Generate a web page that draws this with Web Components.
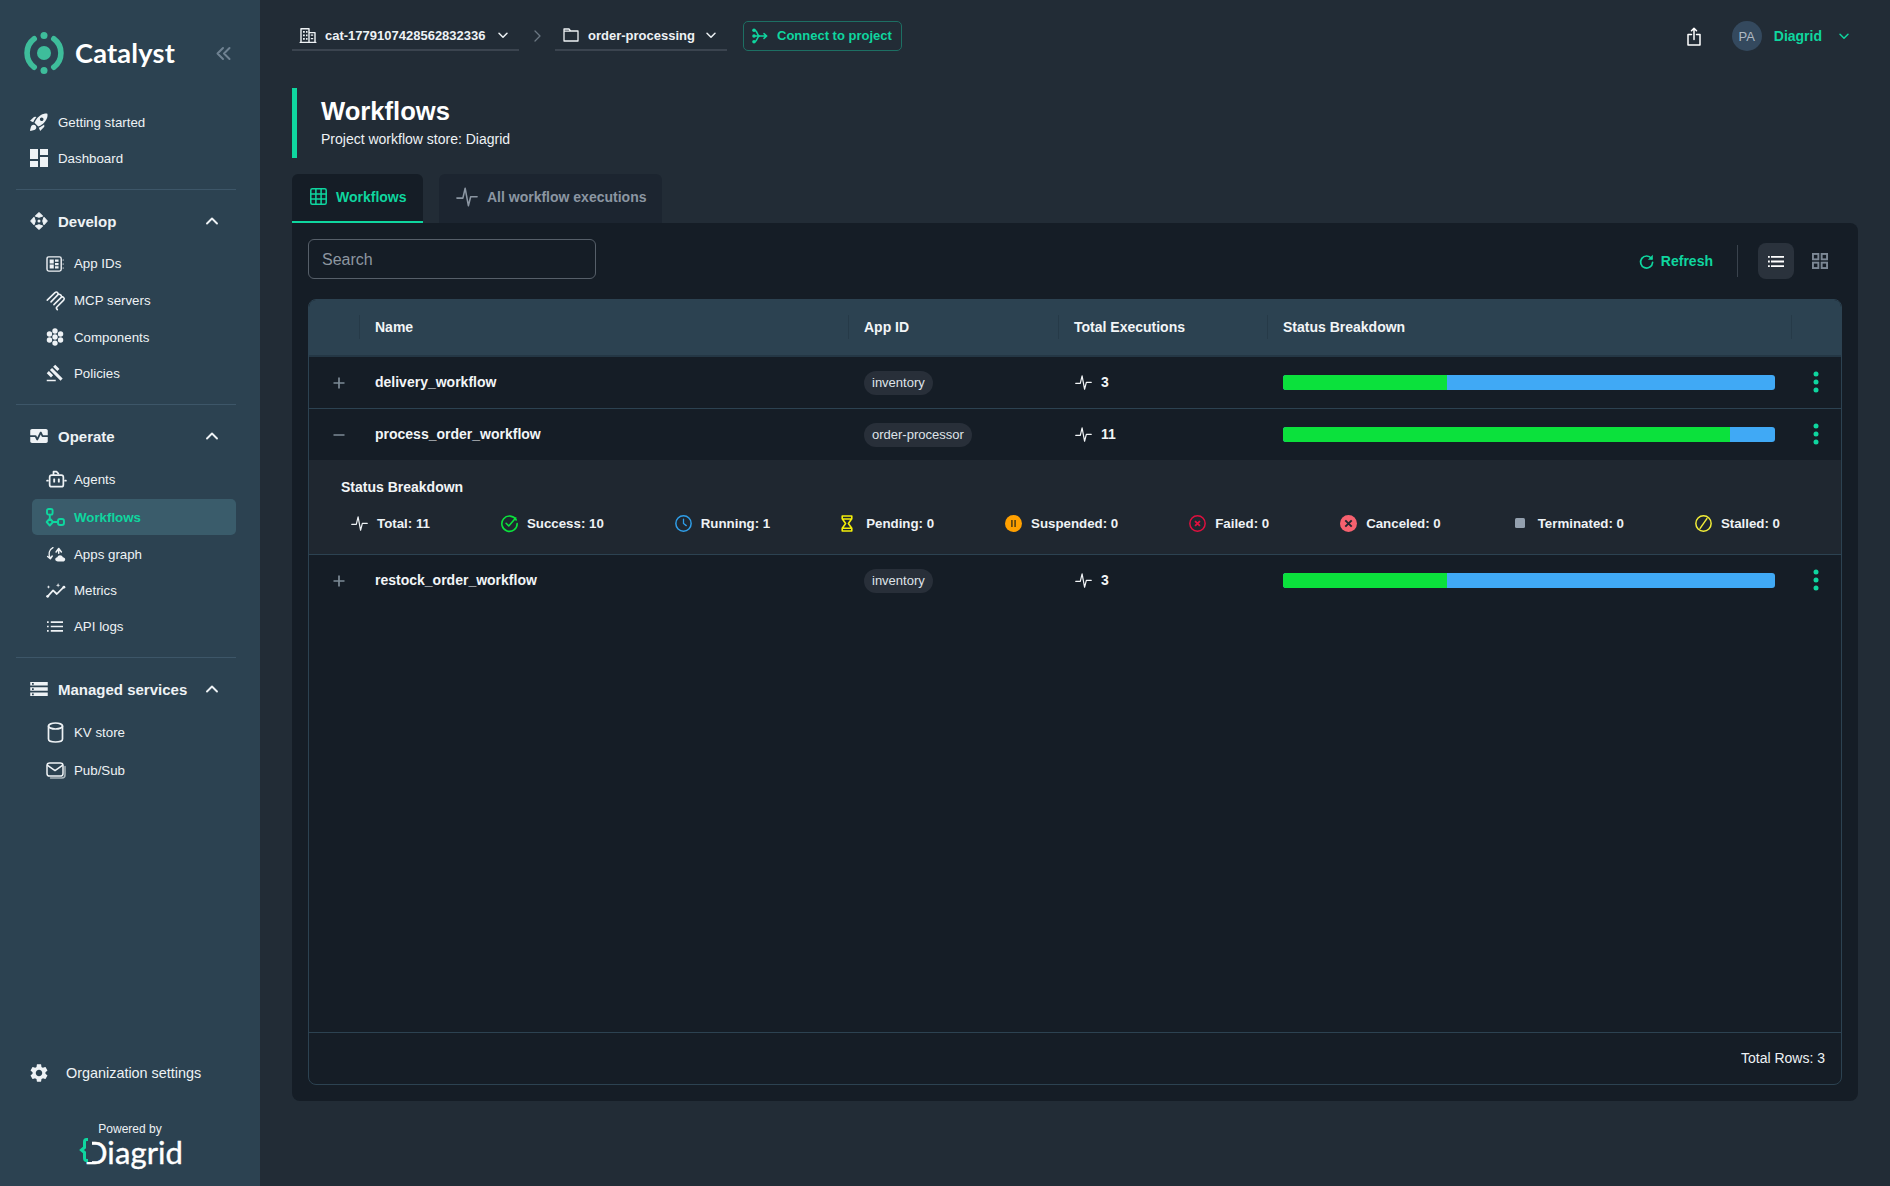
<!DOCTYPE html>
<html lang="en"><head><meta charset="utf-8"><title>Workflows</title>
<style>
html,body{margin:0;padding:0;width:1890px;height:1186px;overflow:hidden;background:#222c36}
body{font-family:"Liberation Sans",Arial,sans-serif;color:#fff}
</style></head><body>
<cat-app>
  <cat-sidebar slot="sidebar">
    <nav-item icon="rocket">Getting started</nav-item>
    <nav-item icon="dashboard">Dashboard</nav-item>
    <nav-rule></nav-rule>
    <nav-head icon="develop">Develop</nav-head>
    <sub-item icon="appids" h="37" gap="6">App IDs</sub-item>
    <sub-item icon="mcp" h="37">MCP servers</sub-item>
    <sub-item icon="components">Components</sub-item>
    <sub-item icon="gavel">Policies</sub-item>
    <nav-rule></nav-rule>
    <nav-head icon="operate">Operate</nav-head>
    <sub-item icon="agent" gap="7">Agents</sub-item>
    <sub-item icon="flow" active>Workflows</sub-item>
    <sub-item icon="graph">Apps graph</sub-item>
    <sub-item icon="metrics">Metrics</sub-item>
    <sub-item icon="logs">API logs</sub-item>
    <nav-rule></nav-rule>
    <nav-head icon="storage">Managed services</nav-head>
    <sub-item icon="kv" gap="7">KV store</sub-item>
    <sub-item icon="pubsub" gap="2.500">Pub/Sub</sub-item>
  </cat-sidebar>
  <top-bar></top-bar>
  <page-header title="Workflows">Project workflow store: Diagrid</page-header>
  <tab-bar></tab-bar>
  <wf-card>
    <wf-table>
      <wf-row name="delivery_workflow" app="inventory" count="3" pct="33.33"></wf-row>
      <wf-row name="process_order_workflow" app="order-processor" count="11" pct="90.9" open></wf-row>
      <wf-detail></wf-detail>
      <wf-row name="restock_order_workflow" app="inventory" count="3" pct="33.33" last></wf-row>
    </wf-table>
  </wf-card>
</cat-app>
<script>
const S=(vb,body,extra='')=>`<svg xmlns="http://www.w3.org/2000/svg" viewBox="${vb}" ${extra}>${body}</svg>`;
const F='fill="currentColor"', L='fill="none" stroke="currentColor" stroke-linecap="round" stroke-linejoin="round"';
const pulse=S('0 0 24 24',`<path ${L} stroke-width="1.7" d="M1 13.200h6.500L10 2.500l3.500 19L16 11.800h7"/>`);
const ICONS={
 rocket:S('2 2 20 20',`<path ${F} d="M9.19 6.35c-2.04 2.29-3.44 5.58-3.57 5.89L2 10.69l4.05-4.05c.47-.47 1.15-.68 1.81-.55l1.33.26zM11.17 17s3.74-1.55 5.89-3.7c5.4-5.4 4.5-9.62 4.21-10.57-.95-.3-5.17-1.19-10.57 4.21C8.55 9.09 7 12.83 7 12.83L11.17 17zm6.48-2.19c-2.29 2.04-5.58 3.44-5.89 3.57L13.31 22l4.05-4.05c.47-.47.68-1.15.55-1.81l-.26-1.33zM9 18c0 .83-.34 1.58-.88 2.12C6.94 21.3 2 22 2 22s.7-4.94 1.88-6.12C4.42 15.34 5.17 15 6 15c1.66 0 3 1.34 3 3zm4-9c0-1.1.9-2 2-2s2 .9 2 2-.9 2-2 2-2-.9-2-2z"/>`),
 dashboard:S('3 3 18 18',`<path ${F} d="M3 13h8V3H3v10zm0 8h8v-6H3v6zm10 0h8V11h-8v10zm0-18v6h8V3h-8z"/>`),
 develop:S('2 2 20 20',`<g ${F} stroke="currentColor" stroke-width="1.200" stroke-linejoin="round"><path d="M12 2.800 16 6.500 12 7.800 8 6.500zM12 21.200 16 17.500 12 16.200 8 17.500zM2.800 12 6.500 8 7.800 12 6.500 16zM21.200 12 17.500 8 16.200 12 17.500 16z"/></g><circle ${F} cx="12" cy="12" r="1.700"/>`),
 operate:S('2 4 20 16',`<path ${F} d="M15.11 12.45 14 10.24l-3.11 6.21c-.16.34-.51.55-.89.55s-.73-.21-.89-.55L7.38 13H2v5c0 1.1.9 2 2 2h16c1.1 0 2-.9 2-2v-5h-6c-.38 0-.73-.21-.89-.55z"/><path ${F} d="M20 4H4c-1.1 0-2 .9-2 2v5h6c.38 0 .73.21.89.55L10 13.76l3.11-6.21c.34-.68 1.45-.68 1.79 0L16.62 11H22V6c0-1.1-.9-2-2-2z"/>`),
 storage:S('2 4 20 16',`<path ${F} d="M2 20h20v-4H2v4zm2-3h2v2H4v-2zM2 4v4h20V4H2zm4 3H4V5h2v2zm-4 7h20v-4H2v4zm2-3h2v2H4v-2z"/>`),
 appids:S('0 0 20 18',`<rect ${L} stroke-width="1.6" x="1" y="1" width="16" height="16" rx="2"/><path ${L} stroke-width="1.2" d="M19 4.5h.4M19 9h.4M19 13.5h.4"/><path ${F} d="M4 4h4.6v4.4H4zM4 9.6h4.6V14H4zM10 4h4v2.6h-4zM10 7.8h4v2.6h-4zM10 11.6h4V14h-4z"/>`),
 mcp:S('0 0 24 24',`<path ${L} stroke-width="1.900" d="M1.500 11.500 10.800 2.600c2.200-2 5 .8 3 3L6 13.600M14 5.200c2.200-2 6 1.200 4 3.400L9.500 17M18 8.400c2.200-2 5.200 1 3.200 3.200L13 19.800c-1.200 1.200-.4 2.200.6 3.200"/>`),
 components:S('0 0 24 24',`<g ${F}><circle cx="12" cy="3.9" r="3.6"/><circle cx="12" cy="12" r="3.6"/><circle cx="12" cy="20.1" r="3.6"/><circle cx="4.6" cy="8" r="3.6"/><circle cx="19.4" cy="8" r="3.6"/><circle cx="4.6" cy="16" r="3.6"/><circle cx="19.4" cy="16" r="3.6"/></g>`),
 gavel:S('0 0 24 24',`<path ${F} d="M1 21h12v2H1v-2zM5.245 8.07l2.83-2.827 14.14 14.142-2.828 2.828L5.245 8.07zM12.317 1l5.657 5.656-2.83 2.83-5.654-5.66L12.317 1zM3.825 9.485l5.657 5.657-2.828 2.828-5.657-5.657 2.828-2.828z"/>`),
 agent:S('0 0 24 21',`<rect ${L} stroke-width="2" x="4" y="6" width="16" height="13.5" rx="2.4"/><path ${L} stroke-width="2" d="M8.5 6V2H12l2.2 2.2M1 12.5h1M22 12.5h1"/><rect ${F} x="8.2" y="10" width="2.2" height="4.6" rx=".6"/><rect ${F} x="13.6" y="10" width="2.2" height="4.6" rx=".6"/>`),
 flow:S('0 0 19 19',`<g ${L} stroke-width="1.900"><rect x="1" y="1" width="5.6" height="5.6" rx="1.6"/><path d="M3.8 6.6v3.9M3.8 10.5 7 14l-3.2 3.5L.7 14zM7 14h5"/><rect x="12" y="11" width="6" height="6" rx="2"/></g>`),
 graph:S('0 0 24 20',`<path ${F} d="M13.8 19.5c-2 0-3.4-1.2-3.4-2.8 0-1.5 1.2-2.6 2.6-2.7.5-1.6 1.9-2.5 3.4-2.5 1.8 0 3.2 1.1 3.6 2.7 1.6.2 3 1.2 3 2.600 0 1.500-1.500 2.700-3.200 2.700z"/><path ${L} stroke-width="1.900" d="M11.500 7.500 14.800 3l3.400 4.500M14.800 3v6M7.500 2C2.800 4.500 1.400 10 4 15.500M.8 13.200 4.200 16l2.400-3.400"/>`),
 metrics:S('0 0 24 18',`<path ${L} stroke-width="2.100" d="M2 16 8.500 8.800l4.500 4.400L21.200 5"/><circle ${F} cx="2" cy="16" r="1.700"/><circle ${F} cx="21.500" cy="5" r="1.700"/><path ${F} d="M3 2.800l.6 1.500 1.500.6-1.500.6L3 7 2.400 5.500.9 4.900l1.500-.6zM14.500 0l.7 2 2 .7-2 .7-.7 2-.7-2-2-.7 2-.7z"/>`),
 logs:S('0 0 17 11',`<path ${F} d="M0 0h1.800v1.800H0zM0 4.600h1.800v1.800H0zM0 9.200h1.800V11H0zM4 0h13v1.800H4zM4 4.600h13v1.800H4zM4 9.200h13V11H4z"/>`),
 kv:S('0 0 17 21',`<g ${L} stroke-width="1.700"><ellipse cx="8.500" cy="4" rx="7" ry="3"/><path d="M1.500 4v13c0 2 3 3 7 3s7-1 7-3V4"/></g>`),
 pubsub:S('0 0 20 17',`<rect ${L} stroke-width="1.500" x="1" y="1" width="16" height="13" rx="2.600"/><path ${L} stroke-width="1.500" d="M1.600 3.400 9 8.600l7.400-5.200"/><path ${L} stroke-width="1.500" opacity=".65" d="M19 4.500V13c0 2-1 3-3 3H4.500"/>`),
 gear:S('2 2 20 20',`<path ${F} d="M19.14 12.94c.04-.3.06-.61.06-.94 0-.32-.02-.64-.07-.94l2.03-1.58c.18-.14.23-.41.12-.61l-1.92-3.32c-.12-.22-.37-.29-.59-.22l-2.39.96c-.5-.38-1.03-.7-1.62-.94l-.36-2.54c-.04-.24-.24-.41-.48-.41h-3.84c-.24 0-.43.17-.47.41l-.36 2.54c-.59.24-1.13.57-1.62.94l-2.39-.96c-.22-.08-.47 0-.59.22L2.74 8.87c-.12.21-.08.47.12.61l2.03 1.58c-.05.3-.09.63-.09.94s.02.64.07.94l-2.03 1.58c-.18.14-.23.41-.12.61l1.92 3.32c.12.22.37.29.59.22l2.39-.96c.5.38 1.03.7 1.62.94l.36 2.54c.05.24.24.41.48.41h3.84c.24 0 .44-.17.47-.41l.36-2.54c.59-.24 1.13-.56 1.62-.94l2.39.96c.22.08.47 0 .59-.22l1.92-3.32c.12-.22.07-.47-.12-.61l-2.01-1.58zM12 15.6c-1.98 0-3.6-1.62-3.6-3.6s1.62-3.6 3.6-3.6 3.6 1.62 3.6 3.6-1.62 3.6-3.6 3.6z"/>`),
 up:S('0 0 12 8',`<path ${L} stroke-width="1.900" d="M1 6.500 6 1.500l5 5"/>`),
 down:S('0 0 10 7',`<path ${L} stroke-width="1.500" d="M1 1.200l4 4 4-4"/>`),
 right:S('0 0 7 12',`<path ${L} stroke-width="1.300" d="M1 1l5 5-5 5"/>`),
 dbl:S('0 0 15 13',`<path ${L} stroke-width="2" d="M7 1 1.500 6.500 7 12M13.500 1 8 6.500l5.500 5.500"/>`),
 building:S('0 0 16 15',`<path ${L} stroke-width="1.400" d="M1 14.400V.8h8v13.600M9 4.600h6v9.800M.2 14.400h15.600"/><path ${F} d="M3 3h1.800v1.800H3zM6 3h1.500v1.800H6zM3 6.500h1.800v1.800H3zM6 6.500h1.500v1.800H6zM3 10h1.800v1.800H3zM6 10h1.500v1.800H6zM10.800 6.500h2.400v1.300h-2.400zM10.800 10h2.400v1.300h-2.400z"/>`),
 folder:S('0 0 16 14',`<path ${L} stroke-width="1.300" d="M1 1h5l1.600 2H15v10H1zM1 3.200h6.600"/>`),
 connect:S('0 0 16 16',`<path ${L} stroke-width="1.500" d="M2 2c4 0 2.500 6 6 6M2 14c4 0 2.500-6 6-6M2 8h12.500M12 5.600 14.700 8 12 10.400"/><g ${F}><circle cx="2" cy="2.200" r="1.800"/><circle cx="2" cy="8" r="1.800"/><circle cx="2" cy="13.800" r="1.800"/></g>`),
 share:S('0 0 14 19',`<path ${L} stroke-width="1.500" d="M4.500 7.500H1v10.500h12V7.500H9.500M7 12.500V1.500M4.500 3.800 7 1.200l2.500 2.600"/>`),
 table:S('0 0 17 17',`<g ${L} stroke-width="1.500"><rect x=".8" y=".8" width="15.400" height="15.400" rx="1.500"/><path d="M.8 5.900h15.400M.8 11.100h15.400M5.900.8v15.400M11.100.8v15.400"/></g>`),
 pulse,
 refresh:S('0 0 16 16',`<path ${L} stroke-width="1.800" d="M13.300 4.800A6.400 6.400 0 1 0 14.500 9"/><path ${F} d="M14.700 .8v5.200H9.500z"/>`),
 list:S('0 0 16 11',`<path ${F} d="M0 0h1.800v1.800H0zM0 4.600h1.800v1.800H0zM0 9.200h1.800V11H0zM3 0h13v1.800H3zM3 4.600h13v1.800H3zM3 9.200h13V11H3z"/>`),
 grid:S('0 0 16 16',`<g fill="none" stroke="currentColor" stroke-width="1.900"><rect x=".95" y=".95" width="5.400" height="5.400"/><rect x="9.650" y=".95" width="5.400" height="5.400"/><rect x=".95" y="9.650" width="5.400" height="5.400"/><rect x="9.650" y="9.650" width="5.400" height="5.400"/></g>`),
 plus:S('0 0 12 12',`<path fill="none" stroke="currentColor" stroke-width="1.700" d="M6 .5v11M.5 6h11"/>`),
 minus:S('0 0 12 12',`<path fill="none" stroke="currentColor" stroke-width="1.700" d="M.5 6h11"/>`),
 kebab:S('0 0 6 22',`<g ${F}><circle cx="3" cy="3" r="2.500"/><circle cx="3" cy="11" r="2.500"/><circle cx="3" cy="19" r="2.500"/></g>`),
 success:S('0 0 16 16',`<path fill="none" stroke="#0be13c" stroke-width="1.500" stroke-linecap="round" d="M14.300 4.700A7.200 7.200 0 1 0 15.200 8"/><path fill="none" stroke="#0be13c" stroke-width="1.500" stroke-linecap="round" stroke-linejoin="round" d="M4.800 7.800 7.300 10.300 13.800 2.800"/>`),
 clock:S('0 0 16 16',`<circle cx="8" cy="8" r="7.200" fill="none" stroke="#2f9ee8" stroke-width="1.400"/><path fill="none" stroke="#2f9ee8" stroke-width="1.200" stroke-linecap="round" d="M8 3.800V8l2.600 2"/>`),
 hourglass:S('0 0 11 16',`<path fill="none" stroke="#f3ee09" stroke-width="1.500" stroke-linejoin="round" d="M1 .9h9V3.500L6.800 8 10 12.500v2.600H1v-2.600L4.200 8 1 3.500zM1.500 3.800h8M1.500 12.500h8"/>`),
 paused:S('0 0 16 16',`<circle cx="8" cy="8" r="8" fill="#ffa000"/><path fill="#4a3a12" d="M5.800 4.800h1.400v6.400H5.800zM8.800 4.800h1.400v6.400H8.800z"/>`),
 failed:S('0 0 16 16',`<circle cx="8" cy="8" r="7.200" fill="none" stroke="#e0103f" stroke-width="1.400"/><path fill="none" stroke="#e0103f" stroke-width="1.700" d="M5.700 5.700l4.600 4.600M10.300 5.700l-4.600 4.600"/>`),
 canceled:S('0 0 16 16',`<circle cx="8" cy="8" r="8" fill="#f6616f"/><path fill="none" stroke="#1f2730" stroke-width="1.800" d="M5 5l6 6M11 5l-6 6"/>`),
 terminated:S('0 0 10 10',`<rect width="10" height="10" rx="1.500" fill="#93a0ae"/>`),
 stalled:S('0 0 16 16',`<circle cx="8" cy="8" r="7.200" fill="none" stroke="#f3ee38" stroke-width="1.400"/><path fill="none" stroke="#f3ee38" stroke-width="1.400" d="M11.500 3 4.500 13"/>`),
 logo:S('0 0 42 42',`<g fill="#3ebd9b"><circle cx="21" cy="21" r="7"/><circle cx="21" cy="3.500" r="3.500"/><circle cx="21" cy="38.500" r="3.500"/></g><g fill="none" stroke="#3ebd9b" stroke-width="5.600" stroke-linecap="round"><path d="M11.200 6.800A17.700 17.700 0 0 0 11.200 35.200"/><path d="M30.800 6.800A17.700 17.700 0 0 1 30.800 35.200"/></g>`),
};
function el(name,css,html,init){
  customElements.define(name,class extends HTMLElement{
    connectedCallback(){
      if(this.shadowRoot)return;
      const r=this.attachShadow({mode:'open'});
      r.innerHTML=`<style>${css}</style>`+(typeof html==='function'?html(this):html);
      if(init)init(this,r);
    }
  });
}
el('cat-icon',':host{display:inline-block;flex:none;line-height:0}svg{width:100%;height:100%;display:block;overflow:visible}',h=>ICONS[h.getAttribute('name')]||'');
const ic=(n,w,h,c='')=>`<cat-icon name="${n}" style="width:${w}px;height:${h}px;${c?'color:'+c:''}"></cat-icon>`;

el('cat-app',`:host{display:flex;width:1890px;height:1186px}
 .main{flex:1;min-width:0;display:flex;flex-direction:column;padding:0 32px 85px;box-sizing:border-box;height:1186px}`,
 `<slot name="sidebar"></slot><div class="main"><slot></slot></div>`);

el('cat-sidebar',`:host{display:flex;flex-direction:column;flex:none;width:260px;height:1186px;background:#2c4251;box-sizing:border-box;color:#fff}
 .logo{height:104px;display:flex;box-sizing:border-box;padding:32px 0 0 23px;position:relative}
 .brand{font:700 27.200px/1 Lato,sans-serif;margin:7px 0 0 10px;height:32px;letter-spacing:.2px;color:#fff}
 .col{color:#6f8292;margin:14px 0 0 41px;display:block}
 .nav{display:flex;flex-direction:column}
 .foot{margin-top:auto;display:flex;flex-direction:column}
 .org{display:flex;align-items:center;height:36px;padding-left:30px;font-size:14.400px;color:#eef2f5}
 .org span{margin-left:18px}
 .pw{font-size:12px;line-height:14px;text-align:center;margin:31px 0 0;color:#eef2f5}
 .dg{position:relative;height:34px;width:102px;margin:2px 0 14px 79px;font:400 31px/28px Lato,sans-serif;-webkit-text-stroke:.4px #fff;color:#fff;padding-left:5px;box-sizing:border-box;white-space:nowrap;letter-spacing:.1px}
 .dg svg{position:absolute;left:0;top:0;width:13px;height:24px}`,
 `<div class="logo">${ic('logo',42,42)}<span class="brand">Catalyst</span><span class="col">${ic('dbl',15,13)}</span></div>
  <div class="nav"><slot></slot></div>
  <div class="foot"><div class="org">${ic('gear',18,18)}<span>Organization settings</span></div>
   <div class="pw">Powered by</div>
   <div class="dg">Diagrid<svg viewBox="0 0 13 24"><rect x="4" width="9" height="24" fill="#2c4251"/><path fill="none" stroke="#0fd69f" stroke-width="3" d="M9 1.500H7.500C6 1.500 5.500 2.500 5.500 4v5.500L2.500 12l3 2.500V20c0 1.500.5 2.500 2 2.500H9"/></svg></div></div>`);

el('nav-item',`:host{display:flex;align-items:center;height:36px;padding-left:30px;font-size:13.300px;color:#eef2f5}
 span{margin-left:10px}`,h=>`${ic(h.getAttribute('icon'),18,18)}<span><slot></slot></span>`);
el('nav-rule',`:host{display:block;height:1px;background:#3d5668;margin:13px 24px 13px 16px}`,'');
el('nav-head',`:host{display:flex;align-items:center;height:36px;padding-left:30px;font-size:15px;font-weight:700;color:#eef2f5;position:relative}
 span{margin-left:10px;flex:1}.c{margin-right:42px}`,h=>{
 const n=h.getAttribute('icon');
 return `${ic(n,18,n==='develop'?18:14)}<span><slot></slot></span><cat-icon class="c" name="up" style="width:12px;height:8px"></cat-icon>`});
const SUB={appids:[18,16],mcp:[20,21],components:[18,18],gavel:[18,18],agent:[21,18],flow:[19,19],graph:[19,16],metrics:[20,15],logs:[16,11],kv:[17,21],pubsub:[20,17]};
const SUBX={logs:1,graph:1,kv:1};
el('sub-item',`:host{display:flex;align-items:center;height:36px;margin:0 24px 0 32px;padding-left:14px;font-size:13.300px;color:#eef2f5;border-radius:5px;box-sizing:border-box}
 :host([active]){background:#3a5c6b;color:#0fd69f;font-weight:700;margin-top:2px;margin-bottom:1px}
 .i{width:19px;display:flex;justify-content:flex-start}span{margin-left:9px}`,h=>{
 const n=h.getAttribute('icon'),[w,ht]=SUB[n];
 if(h.hasAttribute('h'))h.style.height=h.getAttribute('h')+'px';
 if(h.hasAttribute('gap'))h.style.marginTop=h.getAttribute('gap')+'px';
 return `<div class="i" style="padding-left:${SUBX[n]||0}px;width:${19-(SUBX[n]||0)}px">${ic(n,w,ht)}</div><span><slot></slot></span>`});

el('top-bar',`:host{display:flex;align-items:flex-start;height:88px;box-sizing:border-box;padding-top:21px;font-size:13px;font-weight:700;color:#eef2f5;flex:none}
 .crumb{display:flex;align-items:center;height:30px;box-sizing:border-box;border-bottom:2px solid #3b444f;padding-left:8px;margin-top:0}
 .crumb span{margin-left:9px}
 .a{width:227px}.b{width:172px}
 .crumb cat-icon:last-child{margin-left:auto;margin-right:11px}
 .sep{width:36px;height:30px;display:flex;align-items:center;justify-content:center;color:#6b7782}
 .conn{margin-left:16px;width:159px;height:30px;box-sizing:border-box;border:1px solid #1d6f63;border-radius:5px;display:flex;align-items:center;padding-left:8px;color:#0fd69f}
 .conn span{margin:-2px 0 0 9px}
 .right{margin-left:auto;display:flex;align-items:center;height:30px;padding-right:9px}
 .av{width:30px;height:30px;border-radius:50%;background:#34495e;color:#aeb9c4;font-weight:400;font-size:13px;display:flex;align-items:center;justify-content:center;margin-left:31px}
 .nm{margin-left:12px;font-size:14px;color:#0fd69f;margin-right:17px}`,
 `<div class="crumb a">${ic('building',16,15)}<span>cat-1779107428562832336</span>${ic('down',10,7)}</div>
  <div class="sep">${ic('right',7,12)}</div>
  <div class="crumb b">${ic('folder',16,14)}<span>order-processing</span>${ic('down',10,7)}</div>
  <div class="conn">${ic('connect',16,16)}<span>Connect to project</span></div>
  <div class="right">${ic('share',14,19,'#fff')}<div class="av">PA</div><div class="nm">Diagrid</div>${ic('down',10,7,'#0fd69f')}</div>`);

el('page-header',`:host{display:block;box-sizing:border-box;height:70px;border-left:5px solid #0fd69f;padding:8px 0 0 24px;flex:none}
 h1{margin:0;font-size:25.600px;line-height:30px;font-weight:700;color:#fff}
 p{margin:3px 0 0;font-size:14px;line-height:20px;color:#eef2f5}`,
 h=>`<h1>${h.getAttribute('title')}</h1><p><slot></slot></p>`);

el('tab-bar',`:host{display:flex;gap:16px;margin-top:16px;height:49px;flex:none;font-size:14px;font-weight:700}
 .t{display:flex;align-items:center;box-sizing:border-box;border-radius:6px 6px 0 0}
 .on{width:131px;background:#151d26;color:#0fd69f;border-bottom:2px solid #0fd69f;padding:0 0 2px 18px}
 .off{width:223px;background:#1c2530;color:#8b96a2;padding:0 0 4px 17px}
 span{margin-left:9px}`,
 `<div class="t on">${ic('table',17,17)}<span>Workflows</span></div><div class="t off">${ic('pulse',22,22)}<span>All workflow executions</span></div>`);

el('wf-card',`:host{display:flex;flex-direction:column;flex:1;min-height:0;background:#151d26;border-radius:0 8px 8px 8px;padding:16px;box-sizing:border-box}
 .bar{display:flex;align-items:flex-end;justify-content:space-between;height:40px;margin-bottom:20px;flex:none}
 .s{width:288px;height:40px;box-sizing:border-box;border:1px solid #565f69;border-radius:6px;color:#8d96a0;font-size:16px;display:flex;align-items:center;padding:2px 0 0 13px}
 .r{display:flex;align-items:center;height:36px}
 .rf{display:flex;align-items:center;color:#0fd69f;font-size:14px;font-weight:700}
 .rf span{margin-left:7px}
 .d{width:1px;height:32px;background:#3a434d;margin:0 20px 0 24px}
 .b{width:36px;height:36px;display:flex;align-items:center;justify-content:center;border-radius:8px}
 .l{background:#2a323c;color:#fff;margin-right:8px}.g{color:#7c8895;margin-right:4px}`,
 `<div class="bar"><div class="s">Search</div><div class="r"><div class="rf">${ic('refresh',15,15)}<span>Refresh</span></div><div class="d"></div><div class="b l">${ic('list',16,11)}</div><div class="b g">${ic('grid',16,16)}</div></div></div><slot></slot>`);

const COLS='50px 489px 210px 209px 524px 50px';
el('wf-table',`:host{display:flex;flex-direction:column;flex:1;min-height:0;border:1px solid #2c4251;border-radius:8px;overflow:hidden;font-size:14px}
 .h{display:grid;grid-template-columns:${COLS};height:57px;flex:none;background:#2c4251;border-bottom:2px solid #243745;box-sizing:border-box;align-items:center;font-weight:700;color:#f2f5f7;padding-bottom:1px}
 .h div{height:24px;line-height:24px;border-left:1px solid #263a48;padding-left:15px}
 .h div:first-child{border:0}
 .sp{flex:1}
 .f{flex:none;height:52px;border-top:1px solid #2c4251;box-sizing:border-box;display:flex;align-items:center;justify-content:flex-end;padding:0 16px 1px 0;color:#eef2f5}`,
 `<div class="h"><div></div><div>Name</div><div>App ID</div><div>Total Executions</div><div>Status Breakdown</div><div></div></div><slot></slot><div class="sp"></div><div class="f">Total Rows: 3</div>`);

el('wf-row',`:host{display:grid;grid-template-columns:${COLS};height:52px;flex:none;box-sizing:border-box;align-items:center;border-bottom:1px solid #2c4251;color:#f2f5f7;font-weight:700}
 :host([open]){border-bottom:0;height:51px}
 :host([last]){border-bottom-color:transparent}
 .x{display:flex;justify-content:center;color:#7c8a96;padding-left:10px}
 .p{padding-left:16px}
 .nm{padding-bottom:1px}
 .chip{display:inline-block;height:24px;line-height:24px;padding:0 8px;border-radius:12px;background:#282f39;font-size:13px;font-weight:400;color:#dfe3e8}
 .n{display:flex;align-items:center;padding:0 0 1px 17px}.n span{margin-left:9px}
 .bar{display:flex;height:15px;margin:0 16px;border-radius:3px;overflow:hidden;background:#40a9f5}
 .bar i{display:block;background:#0be13c}
 .k{display:flex;color:#0fd69f;padding:0 0 1px 22px}`,
 h=>{const g=k=>h.getAttribute(k);return `<div class="x">${ic(h.hasAttribute('open')?'minus':'plus',12,12)}</div><div class="p nm">${g('name')}</div><div class="p"><span class="chip">${g('app')}</span></div><div class="p n">${ic('pulse',17,17)}<span>${g('count')}</span></div><div><div class="bar"><i style="width:${g('pct')}%"></i></div></div><div class="k">${ic('kebab',6,22)}</div>`});

const STATS=[['pulse','Total: 11',17,17],['success','Success: 10',17,17],['clock','Running: 1',17,17],['hourglass','Pending: 0',12,17],['paused','Suspended: 0',17,17],['failed','Failed: 0',17,17],['canceled','Canceled: 0',17,17],['terminated','Terminated: 0',10,10],['stalled','Stalled: 0',17,17]];
el('wf-detail',`:host{display:block;height:95px;flex:none;background:#1f2730;border-bottom:1px solid #2c4251;box-sizing:border-box;font-size:13.300px;font-weight:700;color:#eef2f5}
 .t{font-size:14px;padding:17px 0 0 32px;line-height:20px;color:#f2f5f7}
 .row{display:flex;justify-content:space-between;padding:16px 61px 0 42px;align-items:center;height:20px}
 .st{display:flex;align-items:center;gap:9px}
 .st.term{gap:13px;padding-left:3px}
 .st.glass{gap:13px}`,
 `<div class="t">Status Breakdown</div><div class="row">${STATS.map(s=>`<div class="st ${s[0]==='terminated'?'term':s[0]==='hourglass'?'glass':''}">${ic(s[0],s[2],s[3])}<span>${s[1]}</span></div>`).join('')}</div>`);
</script>
</body></html>
